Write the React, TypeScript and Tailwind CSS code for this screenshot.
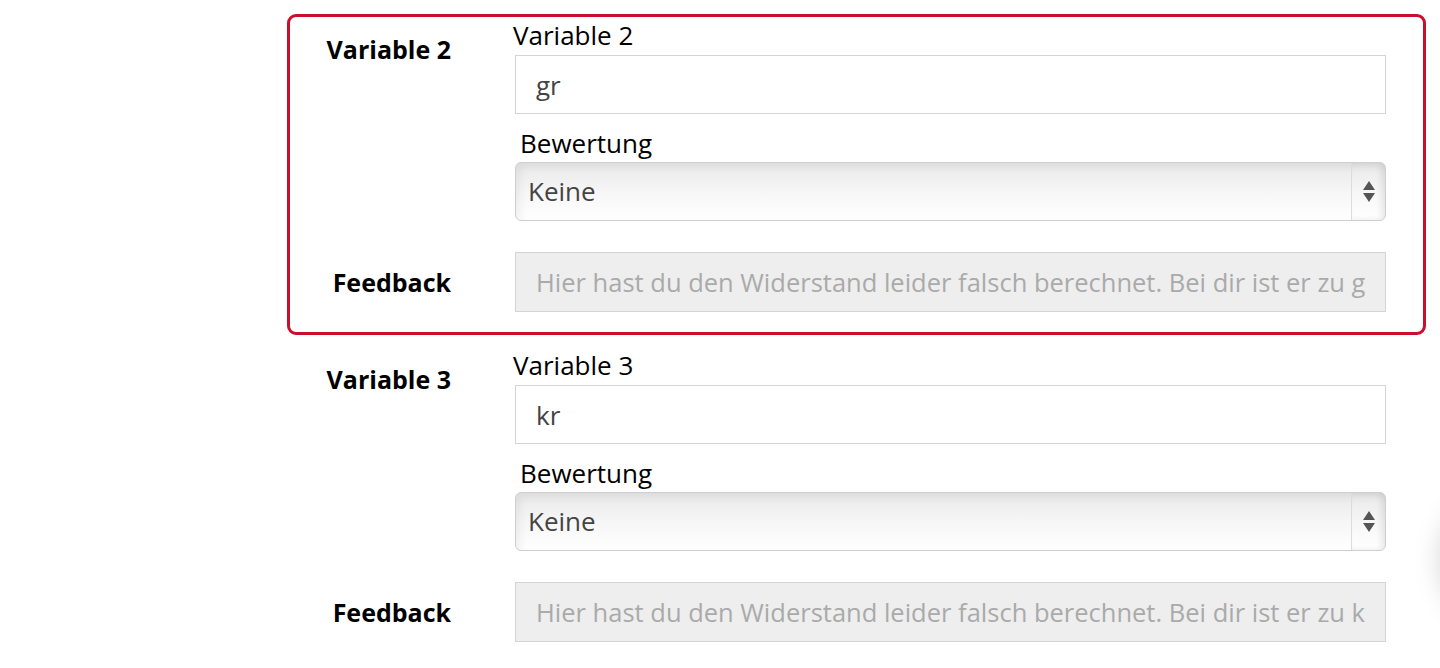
import { useState } from 'react';

interface VariableBlock {
  id: number;
  value: string;
  feedback: string;
  highlighted: boolean;
}

const blocks: VariableBlock[] = [
  {
    id: 2,
    value: 'gr',
    feedback: 'Hier hast du den Widerstand leider falsch berechnet. Bei dir ist er zu groß.',
    highlighted: true,
  },
  {
    id: 3,
    value: 'kr',
    feedback: 'Hier hast du den Widerstand leider falsch berechnet. Bei dir ist er zu klein.',
    highlighted: false,
  },
];

const font = "font-['Open_Sans',sans-serif]";

function FakeSelect({ value }: { value: string }) {
  return (
    <div className="flex h-[59px] rounded-[6px] border border-[#cfcfcf] bg-linear-to-b from-[#e9e9e9] via-[#f6f6f6] to-white shadow-[inset_4px_4px_8px_rgba(0,0,0,0.06)] overflow-hidden">
      <div className="flex-1 flex items-center pl-[12px] text-[26px] text-[#444]">{value}</div>
      <div className="w-[34px] border-l border-[#dcdcdc] flex flex-col items-center justify-center gap-[3px] shadow-[inset_-4px_0_6px_rgba(0,0,0,0.08)]">
        <svg width="12" height="9" viewBox="0 0 12 9">
          <path d="M6 0L12 9H0Z" fill="#555" />
        </svg>
        <svg width="12" height="9" viewBox="0 0 12 9">
          <path d="M0 0H12L6 9Z" fill="#555" />
        </svg>
      </div>
    </div>
  );
}

function Block({ block }: { block: VariableBlock }) {
  const [value, setValue] = useState(block.value);

  return (
    <div
      className={`w-[1139px] ml-[287px] rounded-[9px] border-[3px] pt-[3px] pb-[20px] pr-[37px] ${
        block.highlighted ? 'border-[#c8102e]' : 'border-transparent'
      }`}
    >
      <div className="flex">
        <div className="w-[161px] text-right font-bold text-[25px] text-black pt-[14px] leading-[30px]">
          Variable {block.id}
        </div>
        <div className="flex-1 ml-[64px]">
          <div className="text-[26px] leading-[30px] text-black -ml-[2px]">Variable {block.id}</div>
          <input
            value={value}
            onChange={(e) => setValue(e.target.value)}
            className="mt-[5px] w-full h-[59px] border border-[#d4d4d4] bg-white px-[20px] text-[26px] text-[#444] outline-none"
          />
          <div className="mt-[14px] ml-[5px] text-[26px] leading-[30px] text-black">Bewertung</div>
          <div className="mt-[4px]">
            <FakeSelect value="Keine" />
          </div>
        </div>
      </div>
      <div className="flex items-center mt-[31px]">
        <div className="w-[161px] text-right font-bold text-[25px] text-black leading-[30px]">Feedback</div>
        <div className="flex-1 ml-[64px]">
          <input
            readOnly
            placeholder={block.feedback}
            className="w-full h-[60px] border border-[#d4d4d4] bg-[#eeeeee] px-[20px] text-[25.5px] text-[#999] placeholder:text-[#aaa] outline-none"
          />
        </div>
      </div>
    </div>
  );
}

export default function App() {
  return (
    <div className={`relative h-[668px] w-[1440px] overflow-hidden bg-white ${font}`}>
      <div className="pt-[14px] flex flex-col gap-[9px]">
        {blocks.map((b) => (
          <Block key={b.id} block={b} />
        ))}
      </div>
      <div className="absolute left-[1444px] top-[495px] w-[130px] h-[130px] rounded-full bg-white shadow-[0_0_30px_rgba(0,0,0,0.22)]" />
    </div>
  );
}
